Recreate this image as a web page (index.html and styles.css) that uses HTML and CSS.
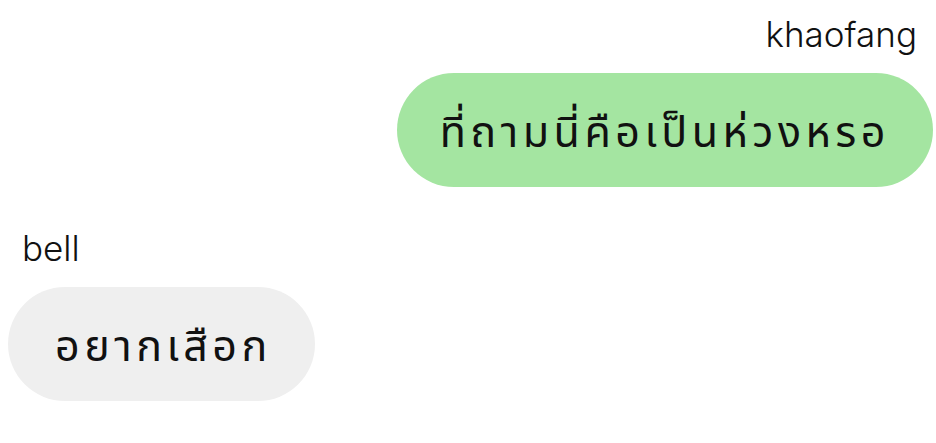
FILE: index.html
```html
<!DOCTYPE html>
<html lang="th">
<head>
<meta charset="utf-8">
<link rel="stylesheet" href="styles.css">
</head>
<body>
<div class="chat">
  <div class="msg msg-out">
    <div class="name">khaofang</div>
    <div class="bubble bubble-green">ที่ถามนี่คือเป็นห่วงหรอ</div>
  </div>
  <div class="msg msg-in">
    <div class="name">bell</div>
    <div class="bubble bubble-gray">อยากเสือก</div>
  </div>
</div>
</body>
</html>
```
FILE: styles.css
```css
html, body {
  margin: 0;
  padding: 0;
  background: #ffffff;
}
body {
  width: 936px;
  height: 443px;
  overflow: hidden;
  font-family: "Noto Sans", "Noto Sans Thai", "DejaVu Sans", sans-serif;
  color: #111;
}
.chat {
  display: flex;
  flex-direction: column;
  padding-top: 12px;
}
.msg {
  display: flex;
  flex-direction: column;
}
.msg-out {
  align-items: flex-end;
  padding-right: 3px;
}
.msg-in {
  align-items: flex-start;
  padding-left: 8px;
  margin-top: 39px;
}
.name {
  font-family: "Inter", "Liberation Sans", sans-serif;
  font-size: 35px;
  font-weight: 300;
  line-height: 44px;
  color: #111;
}
.msg-out .name {
  margin-right: 16px;
}
.msg-in .name {
  margin-left: 14px;
}
.bubble {
  height: 114px;
  border-radius: 57px;
  display: flex;
  align-items: center;
  font-size: 43px;
  letter-spacing: 4.5px;
  line-height: 1;
  padding: 0 43px;
  margin-top: 17px;
  box-sizing: border-box;
}
.bubble-green {
  background: #a4e5a1;
}
.bubble-gray {
  background: #efefef;
  padding: 0 43px 0 47px;
}
```
